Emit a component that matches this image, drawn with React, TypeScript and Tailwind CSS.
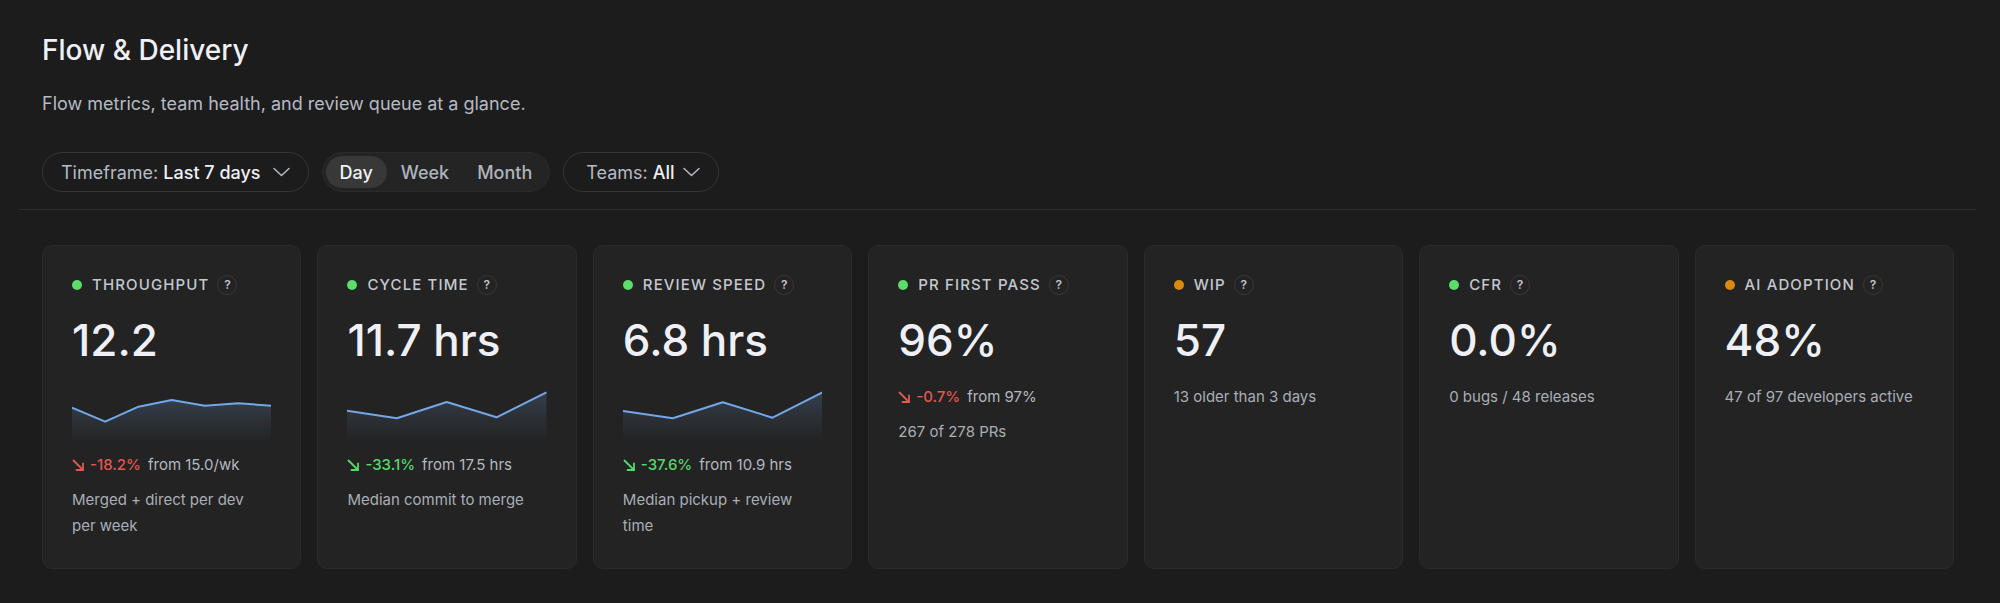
import React from 'react';

type Metric = {
  label: string;
  dot: 'green' | 'amber';
  value: string;
  spark?: number[];
  delta?: { pct: string; from: string; good: boolean };
  desc: string;
};

const metrics: Metric[] = [
  {
    label: 'THROUGHPUT',
    dot: 'green',
    value: '12.2',
    spark: [21.7, 35.7, 20.7, 14, 19.7, 17.3, 19.7],
    delta: { pct: '-18.2%', from: 'from 15.0/wk', good: false },
    desc: 'Merged + direct per dev per week',
  },
  {
    label: 'CYCLE TIME',
    dot: 'green',
    value: '11.7 hrs',
    spark: [24.7, 32.3, 16, 31.3, 6.3],
    delta: { pct: '-33.1%', from: 'from 17.5 hrs', good: true },
    desc: 'Median commit to merge',
  },
  {
    label: 'REVIEW SPEED',
    dot: 'green',
    value: '6.8 hrs',
    spark: [25, 32.3, 16.3, 31.7, 6.3],
    delta: { pct: '-37.6%', from: 'from 10.9 hrs', good: true },
    desc: 'Median pickup + review time',
  },
  {
    label: 'PR FIRST PASS',
    dot: 'green',
    value: '96%',
    delta: { pct: '-0.7%', from: 'from 97%', good: false },
    desc: '267 of 278 PRs',
  },
  { label: 'WIP', dot: 'amber', value: '57', desc: '13 older than 3 days' },
  { label: 'CFR', dot: 'green', value: '0.0%', desc: '0 bugs / 48 releases' },
  { label: 'AI ADOPTION', dot: 'amber', value: '48%', desc: '47 of 97 developers active' },
];

const Sparkline = ({ points, id }: { points: number[]; id: string }) => {
  const step = 200 / (points.length - 1);
  const coords = points.map((y, i) => `${(i * step).toFixed(1)},${y}`);
  const line = coords.join(' ');
  const area = `M0,56 L${coords.join(' L')} L200,56 Z`;
  return (
    <svg width="200" height="56" viewBox="0 0 200 56" preserveAspectRatio="none" className="block w-full h-[56px]">
      <defs>
        <linearGradient id={id} x1="0" y1="0" x2="0" y2="1">
          <stop offset="0%" stopColor="#7aa9e6" stopOpacity="0.2" />
          <stop offset="100%" stopColor="#7aa9e6" stopOpacity="0" />
        </linearGradient>
      </defs>
      <path d={area} fill={`url(#${id})`} />
      <polyline points={line} fill="none" stroke="#72a7e8" strokeWidth="2" strokeLinejoin="round" />
    </svg>
  );
};

const DownArrow = ({ color }: { color: string }) => (
  <svg width="13" height="13" viewBox="0 0 13 13" fill="none" stroke={color} strokeWidth="1.8" strokeLinecap="round" strokeLinejoin="round">
    <path d="M1.5 1.5 L11 11" />
    <path d="M11 4.5 L11 11 L4.5 11" />
  </svg>
);

const Chevron = () => (
  <svg width="17" height="10" viewBox="0 0 17 10" fill="none" stroke="#b5bac3" strokeWidth="1.5" strokeLinecap="round" strokeLinejoin="round">
    <path d="M1 1.5 L8.5 8.5 L16 1.5" />
  </svg>
);

const MetricCard = ({ m, idx }: { m: Metric; idx: number }) => (
  <div className="bg-[#232323] border border-[#2b2b2b] rounded-[10px] p-[29px] flex flex-col">
    <div className="flex items-center h-5">
      <span className={`w-[10px] h-[10px] rounded-full ${m.dot === 'green' ? 'bg-[#5cdc6b]' : 'bg-[#d88b10]'}`} />
      <span className="ml-[10px] text-[15px] font-medium tracking-[0.075em] text-[#c3c8d0]">{m.label}</span>
      <span className="ml-2 w-5 h-5 rounded-full border border-[#383838] flex items-center justify-center text-[12px] font-semibold text-[#c0c4cc]">
        ?
      </span>
    </div>
    <div className="mt-[23px] text-[44px] leading-[44px] font-medium text-[#eef0f6]">{m.value}</div>
    {m.spark && (
      <div className="mt-6">
        <Sparkline points={m.spark} id={`spark-${idx}`} />
      </div>
    )}
    {m.delta && (
      <div className={`${m.spark ? 'mt-3' : 'mt-6'} flex items-center h-[22px] text-[15px]`}>
        <DownArrow color={m.delta.good ? '#55d86c' : '#e2574f'} />
        <span className={`ml-[5px] font-medium ${m.delta.good ? 'text-[#55d86c]' : 'text-[#e2574f]'}`}>{m.delta.pct}</span>
        <span className="ml-[7px] text-[#b4b8c0]">{m.delta.from}</span>
      </div>
    )}
    <div className={`${m.delta ? 'mt-[11px]' : 'mt-[22px]'} text-[15px] leading-[26px] text-[#a9aeb7]`}>{m.desc}</div>
  </div>
);

export default function App() {
  return (
    <div className="min-h-screen bg-[#1c1c1c] pl-[19px] pr-[24px] font-['Inter',sans-serif] pb-8">
      <div className="px-[23px] pt-[32px] pb-[17px] border-b border-[#2c2c2c]">
        <h1 className="text-[28px] leading-[36px] font-medium text-[#eef0f5]">Flow &amp; Delivery</h1>
        <p className="mt-[22px] text-[18px] leading-[28px] text-[#b5bac3]">
          Flow metrics, team health, and review queue at a glance.
        </p>
        <div className="mt-[34px] flex items-center gap-[13px] text-[18px]">
          <button className="h-[40px] pl-[18px] pr-[18px] rounded-full border border-[#353535] flex items-center gap-[12px]">
            <span className="text-[#b5bac3]">
              Timeframe: <span className="text-[#eef0f5] font-medium">Last 7 days</span>
            </span>
            <Chevron />
          </button>
          <div className="h-[40px] p-[3px] rounded-full bg-[#242424] border border-[#2a2a2a] flex items-center">
            <span className="h-[32px] px-[14px] rounded-full bg-[#383838] text-[#f0f2f6] font-medium flex items-center">Day</span>
            <span className="h-[32px] px-[14px] rounded-full text-[#aeb3bc] font-medium flex items-center">Week</span>
            <span className="h-[32px] px-[14px] rounded-full text-[#aeb3bc] font-medium flex items-center">Month</span>
          </div>
          <button className="h-[40px] pl-[22px] pr-[18px] rounded-full border border-[#353535] flex items-center gap-[8px]">
            <span className="text-[#b5bac3]">
              Teams: <span className="text-[#eef0f5] font-medium">All</span>
            </span>
            <Chevron />
          </button>
        </div>
      </div>
      <div className="pl-[23px] pr-[22px] pt-[35px] grid grid-cols-7 gap-4">
        {metrics.map((m, i) => (
          <MetricCard key={m.label} m={m} idx={i} />
        ))}
      </div>
    </div>
  );
}
